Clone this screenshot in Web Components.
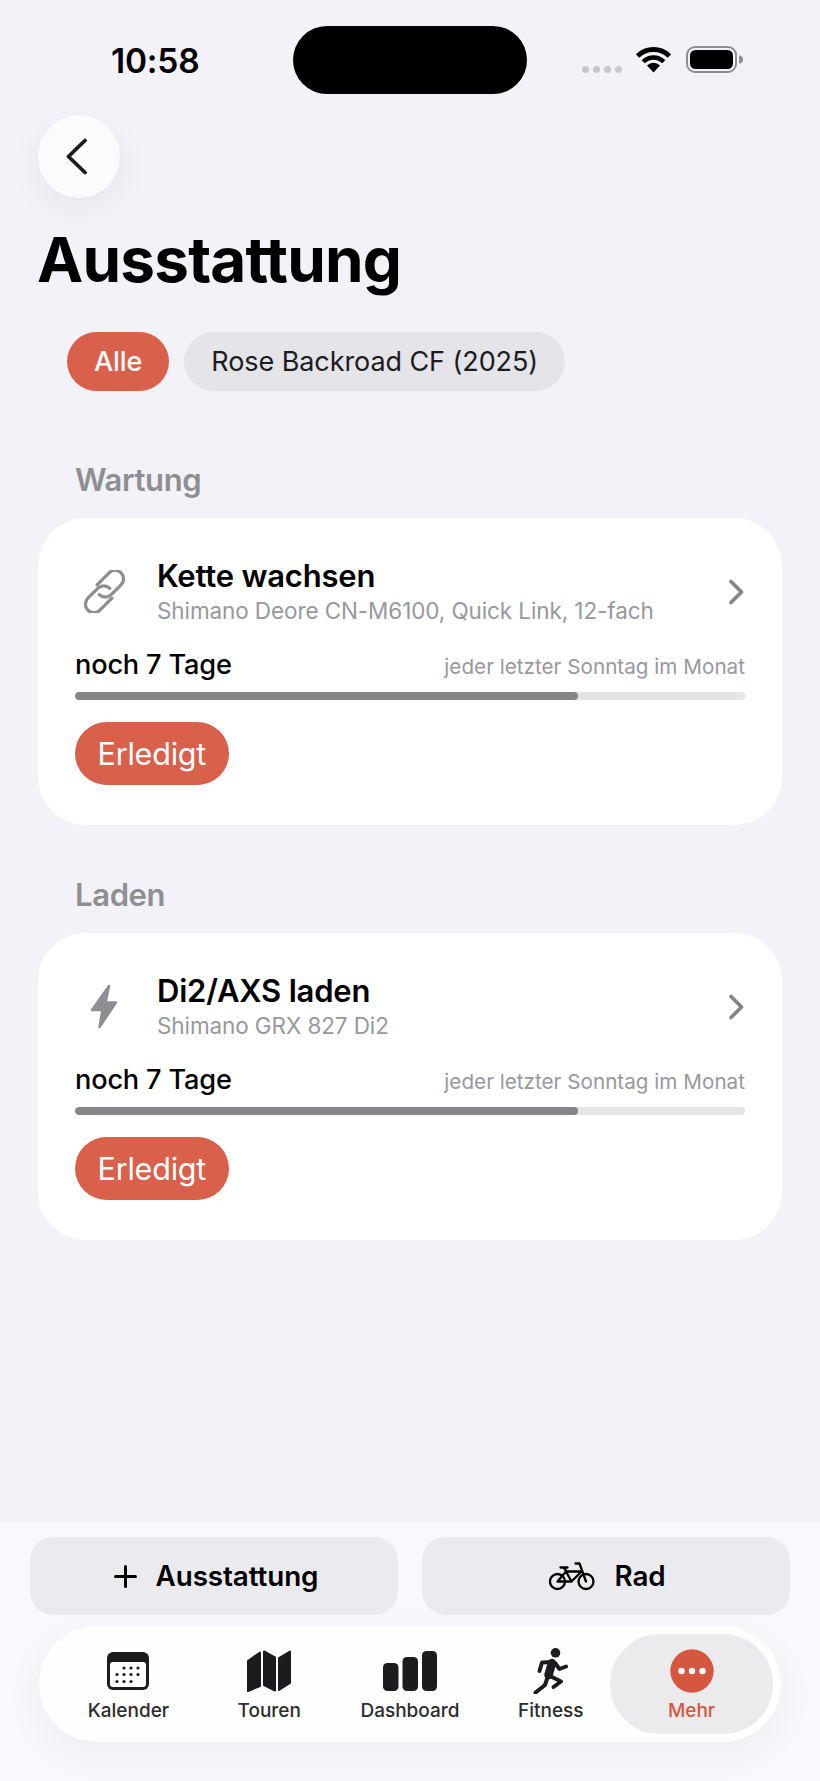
<!DOCTYPE html>
<html lang="de">
<head>
<meta charset="utf-8">
<title>Ausstattung</title>
<style>
  html, body { margin: 0; padding: 0; background: #f2f2f8; }
  body { font-family: Inter, "Liberation Sans", sans-serif; color: #000; }
</style>
</head>
<body>
<app-page>
  <status-bar slot="status" time="10:58"></status-bar>
  <back-button slot="top"></back-button>
  <page-title slot="top">Ausstattung</page-title>
  <chip-row slot="top">
    <filter-chip active>Alle</filter-chip>
    <filter-chip>Rose Backroad CF (2025)</filter-chip>
  </chip-row>

  <section-label slot="top" first>Wartung</section-label>
  <task-card slot="top" name="Kette wachsen" detail="Shimano Deore CN-M6100, Quick Link, 12-fach" remaining="noch 7 Tage" rule="jeder letzter Sonntag im Monat">
    <svg slot="icon" width="43" height="43" viewBox="0 0 43 43" fill="none" stroke="#8e8e92" stroke-width="3.200" stroke-linecap="round">
      <g transform="rotate(-45 21.5 21.5)">
        <path d="M22 31.500H5a8.500 8.500 0 0 1 0-17H19a8.500 8.500 0 0 1 8.500 8.500"/>
        <path d="M21 11.500h17a8.500 8.500 0 0 1 0 17H24a8.500 8.500 0 0 1-8.500-8.500"/>
      </g>
    </svg>
  </task-card>

  <section-label slot="top">Laden</section-label>
  <task-card slot="top" name="Di2/AXS laden" detail="Shimano GRX 827 Di2" remaining="noch 7 Tage" rule="jeder letzter Sonntag im Monat">
    <svg slot="icon" width="28" height="45" viewBox="0 0 28 45">
      <path d="M19 2 2 26h10.5L9.500 43 26 18.500H15.500Z" fill="#8e8e92" stroke="#8e8e92" stroke-width="2.500" stroke-linejoin="round"/>
    </svg>
  </task-card>

  <bottom-panel slot="bottom">
    <action-button slot="actions" label="Ausstattung">
      <svg slot="icon" width="23" height="23" viewBox="0 0 23 23" stroke="#000" stroke-width="3" stroke-linecap="round"><path d="M11.500 1.500v20M1.500 11.500h20"/></svg>
    </action-button>
    <action-button slot="actions" label="Rad">
      <svg slot="icon" width="46" height="29" viewBox="0 0 46 29" fill="none" stroke="#000" stroke-width="2.300" stroke-linecap="round" stroke-linejoin="round">
        <circle cx="8.500" cy="19.500" r="7.500"/>
        <circle cx="37" cy="19.500" r="7.500"/>
        <path d="M8.500 19.500 17 9.500h15.500M17 9.500l5.500 10L32.500 9.500M8.500 19.500h14M15 6l2.500 3.500M11.500 5.500h7M26.500 1.500h4l6.500 18"/>
      </svg>
    </action-button>
    <tab-bar slot="tabs">
      <tab-item label="Kalender">
        <svg width="42" height="38" viewBox="0 0 42 38">
          <rect width="42" height="38" rx="6" fill="#1c1c1e"/>
          <rect x="3" y="10" width="36" height="25" rx="3" fill="#fefefe"/>
          <g fill="#1c1c1e">
            <circle cx="17" cy="16" r="1.600"/><circle cx="24" cy="16" r="1.600"/><circle cx="31" cy="16" r="1.600"/>
            <circle cx="10" cy="22.500" r="1.600"/><circle cx="17" cy="22.500" r="1.600"/><circle cx="24" cy="22.500" r="1.600"/><circle cx="31" cy="22.500" r="1.600"/>
            <circle cx="10" cy="29.500" r="1.600"/><circle cx="17" cy="29.500" r="1.600"/><circle cx="24" cy="29.500" r="1.600"/>
          </g>
        </svg>
      </tab-item>
      <tab-item label="Touren">
        <svg width="44" height="42" viewBox="0 0 44 42" fill="#1c1c1e" stroke="#1c1c1e" stroke-width="2" stroke-linejoin="round">
          <path d="M1 11 13 2.500V36L1 41Z"/>
          <path d="M17 1.500 28 7.500V40.500L17 35Z"/>
          <path d="M32 8 43 1.500V33L32 40Z"/>
        </svg>
      </tab-item>
      <tab-item label="Dashboard">
        <svg width="54" height="40" viewBox="0 0 54 40" fill="#1c1c1e">
          <rect x="0" y="12" width="15.500" height="28" rx="4.500"/>
          <rect x="19.500" y="6" width="15.500" height="34" rx="4.500"/>
          <rect x="39" y="0" width="15" height="40" rx="4.500"/>
        </svg>
      </tab-item>
      <tab-item label="Fitness">
        <svg width="35" height="46" viewBox="0 0 35 46" fill="none" stroke="#1c1c1e" stroke-width="4" stroke-linecap="round" stroke-linejoin="round">
          <circle cx="22.500" cy="4.800" r="4.800" fill="#1c1c1e" stroke="none"/>
          <path d="M20 14 9 14.500 6.500 23"/>
          <path d="M22 15 26.500 21 33 18.500"/>
          <path d="M19 15 15.500 27" stroke-width="8.500"/>
          <path d="M15 28 12 37 2.500 44.500"/>
          <path d="M17 28 28 33.500 20.500 39"/>
        </svg>
      </tab-item>
      <tab-item label="Mehr" active>
        <svg width="44" height="44" viewBox="0 0 44 44">
          <circle cx="22" cy="22" r="21.700" fill="#d5573f"/>
          <g fill="#fff"><circle cx="11.500" cy="22" r="3.200"/><circle cx="22" cy="22" r="3.200"/><circle cx="32.500" cy="22" r="3.200"/></g>
        </svg>
      </tab-item>
    </tab-bar>
  </bottom-panel>
</app-page>

<script>
/**
 * Creates a template from a markup string.
 *
 * @param {string} html - The markup of the template.
 * @returns {HTMLTemplateElement} The template.
 */
function makeTemplate (html) {
  const template = document.createElement('template')
  template.innerHTML = html
  return template
}

/**
 * Base class that attaches an open shadow root and clones the template into it.
 */
class ShadowElement extends HTMLElement {
  constructor (template) {
    super()
    this.attachShadow({ mode: 'open' })
    this.shadowRoot.appendChild(template.content.cloneNode(true))
  }

  setText (selector, attribute) {
    this.shadowRoot.querySelector(selector).textContent = this.getAttribute(attribute) || ''
  }
}

const appPageTemplate = makeTemplate(`
<style>
  :host { display: flex; flex-direction: column; width: 820px; height: 1781px; overflow: hidden; background: #f2f2f8; }
  main { flex: 1; }
</style>
<slot name="status"></slot>
<main><slot name="top"></slot></main>
<slot name="bottom"></slot>
`)
class AppPage extends ShadowElement {
  constructor () { super(appPageTemplate) }
}
customElements.define('app-page', AppPage)

const statusBarTemplate = makeTemplate(`
<style>
  :host { display: grid; grid-template-columns: 293px 234px 293px; height: 100px; box-sizing: border-box; padding-top: 26px; }
  .time { padding: 15px 0 0 111px; font: 600 33.500px/40px Inter, sans-serif; letter-spacing: -0.2px; color: #000; }
  .island { height: 68px; border-radius: 34px; background: #000; }
  .icons { display: flex; align-items: flex-start; padding: 20px 0 0 55px; }
  .dots { display: flex; gap: 4px; margin-top: 20px; }
  .dots i { width: 7px; height: 7px; border-radius: 50%; background: #c8c8cc; }
  .wifi { margin-left: 14px; margin-top: 1px; }
  .battery { margin-left: 15px; }
</style>
<div class="time"></div>
<div class="island"></div>
<div class="icons">
  <div class="dots"><i></i><i></i><i></i><i></i></div>
  <svg class="wifi" width="35" height="26" viewBox="0 0 35 26" fill="none" stroke="#000">
    <path d="M1.600 9.100a22.500 22.500 0 0 1 31.800 0" stroke-width="5"/>
    <path d="M7.250 14.750a14.500 14.500 0 0 1 20.500 0" stroke-width="4.500"/>
    <path d="M17.500 25.500 11 18.500a9.200 9.200 0 0 1 13 0Z" fill="#000" stroke="none"/>
  </svg>
  <svg class="battery" width="57" height="27" viewBox="0 0 57 27">
    <rect x="1" y="1" width="49" height="25" rx="8" fill="none" stroke="#8e8e93" stroke-width="2"/>
    <rect x="4" y="4" width="43" height="19" rx="5.500" fill="#000"/>
    <path d="M53 9.500a4 4 0 0 1 0 8Z" fill="#8e8e93"/>
  </svg>
</div>
`)
class StatusBar extends ShadowElement {
  constructor () { super(statusBarTemplate) }
  connectedCallback () { this.setText('.time', 'time') }
}
customElements.define('status-bar', StatusBar)

const backButtonTemplate = makeTemplate(`
<style>
  :host { display: flex; align-items: center; justify-content: center; width: 82px; height: 83px; margin: 15px 0 0 38px; border-radius: 50%; background: #fbfbfe; box-shadow: 0 10px 36px rgba(0, 0, 0, 0.05); }
  svg { margin-left: -5px; }
</style>
<svg width="23" height="37" viewBox="0 0 23 37" fill="none" stroke="#1c1c1e" stroke-width="3.800" stroke-linecap="round" stroke-linejoin="round"><path d="M20 2.500 3.500 18.500 20 34.500"/></svg>
`)
class BackButton extends ShadowElement {
  constructor () { super(backButtonTemplate) }
}
customElements.define('back-button', BackButton)

const pageTitleTemplate = makeTemplate(`
<style>
  :host { display: block; margin: 26px 0 0 37px; font: 700 62px/72px Inter, sans-serif; letter-spacing: -0.800px; color: #000; }
</style>
<slot></slot>
`)
class PageTitle extends ShadowElement {
  constructor () { super(pageTitleTemplate) }
}
customElements.define('page-title', PageTitle)

const chipRowTemplate = makeTemplate(`
<style>
  :host { display: flex; gap: 15px; margin: 36px 0 0 67px; }
</style>
<slot></slot>
`)
class ChipRow extends ShadowElement {
  constructor () { super(chipRowTemplate) }
}
customElements.define('chip-row', ChipRow)

const filterChipTemplate = makeTemplate(`
<style>
  :host { display: block; height: 59px; padding: 0 27px; border-radius: 29.500px; background: #e4e4e9; color: #1c1c1e; font: 400 27px/59px Inter, sans-serif; letter-spacing: -0.080px; white-space: nowrap; }
  :host([active]) { background: #d9604a; color: #fff; font-weight: 500; }
</style>
<slot></slot>
`)
class FilterChip extends ShadowElement {
  constructor () { super(filterChipTemplate) }
}
customElements.define('filter-chip', FilterChip)

const sectionLabelTemplate = makeTemplate(`
<style>
  :host { display: block; margin: 50px 0 18px 75px; font: 600 31px/40px Inter, sans-serif; letter-spacing: -0.350px; color: #8e8e93; }
  :host([first]) { margin-top: 69px; }
</style>
<slot></slot>
`)
class SectionLabel extends ShadowElement {
  constructor () { super(sectionLabelTemplate) }
}
customElements.define('section-label', SectionLabel)

const taskCardTemplate = makeTemplate(`
<style>
  :host { display: block; box-sizing: border-box; margin: 0 38px; padding: 40px 37px 40px; border-radius: 48px; background: #fff; }
  .head { display: flex; align-items: center; }
  .icon { display: flex; justify-content: center; flex: none; width: 48px; margin: 0 29px 0 5px; }
  .text { flex: 1; min-width: 0; }
  .name { font: 600 31px/36px Inter, sans-serif; letter-spacing: -0.200px; color: #000; }
  .detail { margin-top: 3px; font: 400 22.500px/28px Inter, sans-serif; letter-spacing: -0.100px; color: #98989d; }
  .chevron { margin-right: 1px; }
  .row { display: flex; justify-content: space-between; align-items: baseline; margin-top: 23px; }
  .remaining { font: 500 27.200px/34px Inter, sans-serif; letter-spacing: -0.200px; color: #000; }
  .rule { font: 400 20.700px/26px Inter, sans-serif; color: #98989d; }
  .track { height: 8px; margin-top: 10px; border-radius: 4px; background: #e5e5e7; overflow: hidden; }
  .fill { width: 75%; height: 100%; border-radius: 4px; background: #85858b; }
  .done { display: inline-block; margin-top: 22px; height: 63px; padding: 0 22.500px; border-radius: 31.500px; background: #d9604a; color: #fff; font: 400 30.500px/63px Inter, sans-serif; letter-spacing: -0.200px; }
</style>
<div class="head">
  <div class="icon"><slot name="icon"></slot></div>
  <div class="text">
    <div class="name"></div>
    <div class="detail"></div>
  </div>
  <svg class="chevron" width="16" height="26" viewBox="0 0 16 26" fill="none" stroke="#838388" stroke-width="3.600" stroke-linecap="round" stroke-linejoin="round"><path d="M3 2.500 13.500 13 3 23.500"/></svg>
</div>
<div class="row">
  <span class="remaining"></span>
  <span class="rule"></span>
</div>
<div class="track"><div class="fill"></div></div>
<div class="done">Erledigt</div>
`)
class TaskCard extends ShadowElement {
  constructor () { super(taskCardTemplate) }
  connectedCallback () {
    this.setText('.name', 'name')
    this.setText('.detail', 'detail')
    this.setText('.remaining', 'remaining')
    this.setText('.rule', 'rule')
  }
}
customElements.define('task-card', TaskCard)

const bottomPanelTemplate = makeTemplate(`
<style>
  :host { display: block; box-sizing: border-box; height: 259px; padding-top: 15px; background: #f9f9fd; }
  .actions { display: grid; grid-template-columns: 1fr 1fr; gap: 23.500px; margin: 0 30.500px 0 30px; }
</style>
<div class="actions"><slot name="actions"></slot></div>
<slot name="tabs"></slot>
`)
class BottomPanel extends ShadowElement {
  constructor () { super(bottomPanelTemplate) }
}
customElements.define('bottom-panel', BottomPanel)

const actionButtonTemplate = makeTemplate(`
<style>
  :host { display: flex; align-items: center; justify-content: center; gap: 19px; height: 78px; box-sizing: border-box; padding-left: 4px; border-radius: 24px; background: #ebebef; font: 600 27.800px/34px Inter, sans-serif; letter-spacing: -0.100px; color: #000; }
  ::slotted(svg) { display: block; }
</style>
<slot name="icon"></slot>
<span></span>
`)
class ActionButton extends ShadowElement {
  constructor () { super(actionButtonTemplate) }
  connectedCallback () { this.setText('span', 'label') }
}
customElements.define('action-button', ActionButton)

const tabBarTemplate = makeTemplate(`
<style>
  :host { display: grid; grid-template-columns: repeat(5, 140.800px); height: 116px; box-sizing: border-box; margin: 11px 39px 0; padding: 8px 18px 8px 19px; border-radius: 58px; background: #fefefe; box-shadow: 0 12px 40px rgba(0, 0, 0, 0.05); }
</style>
<slot></slot>
`)
class TabBar extends ShadowElement {
  constructor () { super(tabBarTemplate) }
}
customElements.define('tab-bar', TabBar)

const tabItemTemplate = makeTemplate(`
<style>
  :host { display: flex; flex-direction: column; align-items: center; height: 100px; box-sizing: border-box; padding-top: 14px; color: #2c2c2e; }
  :host([active]) { margin: 0 -11px; border-radius: 50px; background: #ebebed; color: #d5573f; }
  .icon { display: flex; align-items: center; justify-content: center; height: 46px; }
  .label { margin-top: 5px; font: 500 19px/23px Inter, sans-serif; }
</style>
<div class="icon"><slot></slot></div>
<div class="label"></div>
`)
class TabItem extends ShadowElement {
  constructor () { super(tabItemTemplate) }
  connectedCallback () { this.setText('.label', 'label') }
}
customElements.define('tab-item', TabItem)
</script>
</body>
</html>
